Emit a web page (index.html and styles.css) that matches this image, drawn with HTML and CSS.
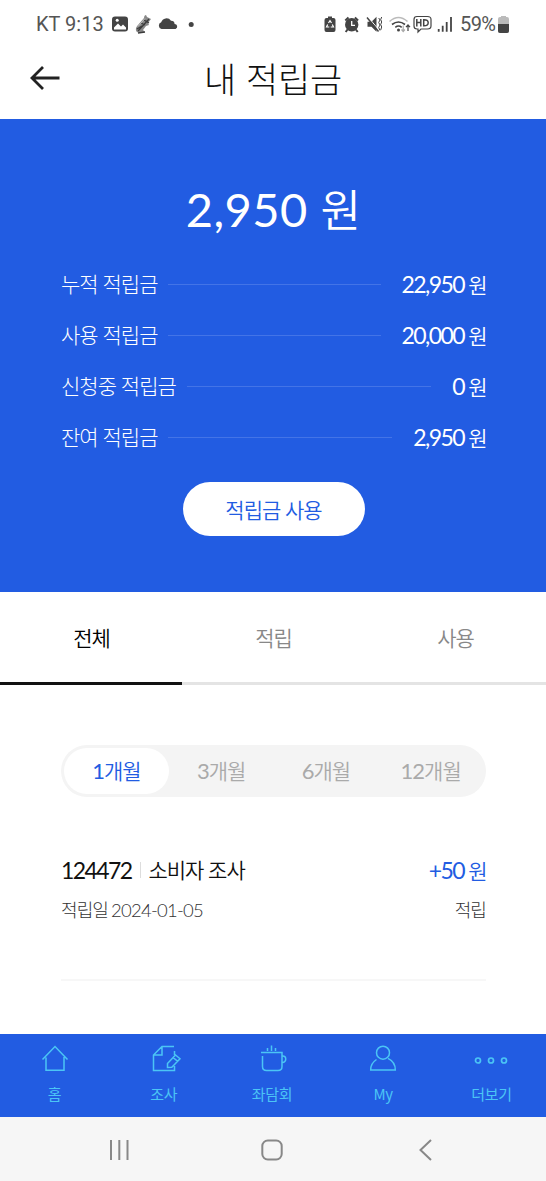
FILE: index.html
```html
<!DOCTYPE html>
<html lang="ko">
<head>
<meta charset="utf-8">
<title>내 적립금</title>
<link rel="stylesheet" href="styles.css">
</head>
<body>
<div class="screen">
  <div class="status">
    <span class="carrier">KT 9:13</span>
    <svg class="status-left" width="84" height="22" viewBox="0 0 84 22">
      <rect x="0" y="3.500" width="16" height="15" rx="3" fill="#444"/>
      <path d="M2 14.500l4-4 3 3 2-2 3 3v2H2z" fill="#fff"/><circle cx="5.200" cy="7.300" r="1.500" fill="#fff"/>
      <path d="M25 19c-2-2-1-5 1-7l6-7c0-2 1-3 2-3l1 2 4 2-3 4 1 2-3 1-3 4 2 2-5 1z" fill="#888"/>
      <path d="M26 18L37 6M25 16l5-3m-1-3 4 2m-1-5 5 3m-11 10 7-1" stroke="#3c3c3c" stroke-width="1.300" fill="none"/>
      <path d="M26 13.500l7-8" stroke="#ccc" stroke-width=".8"/>
      <path d="M49.500 16a3.500 3.500 0 0 1-.3-6.700A5.500 5.500 0 0 1 59 7.700a3.500 3.500 0 0 1 3.600 3.300 2.600 2.600 0 0 1 1 5z" fill="#444"/>
      <circle cx="79.200" cy="11.500" r="2.500" fill="#444"/>
    </svg>
    <svg class="status-right" width="132" height="22" viewBox="0 0 132 22" fill="none" stroke="#444" stroke-width="1.600">
      <path d="M4 5V3.500h4V5h1.500q2 0 2 2v10q0 2-2 2h-7q-2 0-2-2V7q0-2 2-2z" fill="#444" stroke="none"/>
      <path d="M4.500 10L6 7.600 7.500 10M3.700 11.500L2.500 14h2.800M8.300 11.500L9.500 14H6.700" stroke="#fff" stroke-width="1.200"/>
      <circle cx="27.700" cy="11.800" r="6.700" fill="#444" stroke="none"/>
      <path d="M21.300 7.500l3.200-3M34.100 7.500l-3.200-3M23.500 16.500L21.700 19M31.900 16.500l1.800 2.500" stroke-width="2"/>
      <path d="M27.700 8v4.300h3.300" stroke="#fff" stroke-width="1.300"/>
      <path d="M43.500 8.700h4l5-5v15l-5-5h-4z" fill="#444" stroke="none"/>
      <path d="M44.500 4.500l10 12" stroke="#fff" stroke-width="1"/><path d="M43 4.500l11.500 14" stroke-width="1.500"/>
      <path d="M54.700 5l1.300 2-1.300 2.500 1.300 2.500-1.300 2.500 1.300 3M57.700 4l-1 2.500 1 2.500-1 2.500 1 2.500-1 3" stroke-width="1"/>
      <path d="M65.500 8.500q9-8 18 0" stroke="#bbb"/><path d="M68 11.500q6.500-5 13 0M71.300 14.300q3.200-2.500 6.400 0"/><circle cx="74.500" cy="17" r="1.500" fill="#444" stroke="none"/>
      <path d="M79.200 12.500v6m-1.700-2l1.700 2 1.700-2" stroke="#aaa" stroke-width="1.200"/><path d="M84 18v-6m-2 2.200l2-2.200 2 2.200" stroke-width="1.200"/>
      <path d="M93 3.500h10.500q3.500 0 3.500 3v6.500q0 3-3.500 3H97l-3 3v-3h-1q-3 0-3-3V6.500q0-3 3-3z" stroke-width="1.200"/>
      <path d="M92.800 6v7.500m4-7.500v7.500m-4-4h4M99.700 6.700v6.100q4.500.2 4.500-3t-4.500-3.100z" stroke-width="1.500"/>
      <path d="M114.700 16v2.700M118.700 12.700v6M122.700 9v9.700M127 4v14.700" stroke-width="1.800"/>
    </svg>
    <span class="battery-text">59%</span>
    <svg class="battery" width="11" height="17" viewBox="0 0 11 17"><path d="M3 1V0h5v1h1q2 0 2 2v12q0 2-2 2H2q-2 0-2-2V3q0-2 2-2z" fill="#bbb"/><path d="M0 8h11v7q0 2-2 2H2q-2 0-2-2z" fill="#444"/></svg>
  </div>

  <header class="header">
    <svg class="back" width="32" height="26" viewBox="0 0 32 26" fill="none" stroke="#222" stroke-width="2.800"><path d="M30.500 13H3M14 2L3 13l11 11"/></svg>
    <h1 class="title">내 적립금</h1>
  </header>

  <section class="hero">
    <div class="total">2,950 <span class="won">원</span></div>
    <dl class="summary">
      <div class="line"><dt>누적 적립금</dt><i></i><dd>22,950 <span class="won">원</span></dd></div>
      <div class="line"><dt>사용 적립금</dt><i></i><dd>20,000 <span class="won">원</span></dd></div>
      <div class="line"><dt>신청중 적립금</dt><i></i><dd>0 <span class="won">원</span></dd></div>
      <div class="line"><dt>잔여 적립금</dt><i></i><dd>2,950 <span class="won">원</span></dd></div>
    </dl>
    <button class="use">적립금 사용</button>
  </section>

  <nav class="tabs"><span class="tab active">전체</span><span class="tab">적립</span><span class="tab">사용</span></nav>

  <main class="history">
    <div class="periods"><span class="period on">1<span class="ko">개월</span></span><span class="period">3<span class="ko">개월</span></span><span class="period">6<span class="ko">개월</span></span><span class="period">12<span class="ko">개월</span></span></div>
    <article class="entry">
      <div class="row main-row"><span class="name"><span>124472</span><i class="bar"></i><span class="kind">소비자 조사</span></span><span class="amount">+50 <span class="won">원</span></span></div>
      <div class="row sub-row"><span>적립일 <span class="date">2024-01-05</span></span><span>적립</span></div>
    </article>
  </main>

  <nav class="bottom">
    <div class="item"><svg width="30" height="30" viewBox="0 0 30 30"><path d="M2.500 15.500L15 2.500l12.500 13M6 13.500v12.800h18V13"/></svg><span>홈</span></div>
    <div class="item"><svg width="30" height="30" viewBox="0 0 30 30"><path d="M25 2.500H13L4.500 11v15.500h21V22M25.500 7V11M4.500 11H13V2.500M18.500 19.500l8-8.500 4.500 3.700-8.200 8.500-4.300.2zM24 13.500l4.500 3.700"/></svg><span>조사</span></div>
    <div class="item cup"><svg width="30" height="30" viewBox="0 0 30 30"><path d="M4 8.500h21v14q0 4-4 4H9.500q-4 0-4-4V12M25 12c5-1 5 7 0 6.500M10.500 4v3M14.500 1.500V7M18.500 4v3"/></svg><span>좌담회</span></div>
    <div class="item my"><svg width="30" height="30" viewBox="0 0 30 30"><circle cx="15" cy="8.700" r="6.500"/><path d="M8.500 15.500Q2.500 19.500 2.700 26h24.600Q27.500 18 20 14.300"/></svg><span>My</span></div>
    <div class="item"><svg width="36" height="30" viewBox="0 0 36 30"><g stroke-width="1.700"><circle cx="5" cy="16.500" r="2.500"/><circle cx="18" cy="16.500" r="2.500"/><circle cx="31" cy="16.500" r="2.500"/></g></svg><span>더보기</span></div>
  </nav>

  <div class="system">
    <svg width="22" height="22" viewBox="0 0 22 22"><path d="M3 1v20M11.300 1v20M19.500 1v20"/></svg>
    <svg width="22" height="22" viewBox="0 0 22 22"><rect x="1.300" y="1.500" width="19.400" height="19" rx="5.500"/></svg>
    <svg width="22" height="22" viewBox="0 0 22 22"><path d="M16 1L5.500 11 16 21"/></svg>
  </div>
</div>
</body>
</html>
```
FILE: styles.css
```css
* { box-sizing: border-box; }
body { margin: 0; background: #fff; font-family: Lato, "Noto Sans CJK KR", sans-serif; }
.screen { width: 546px; height: 1181px; display: flex; flex-direction: column; overflow: hidden; }
svg { display: block; flex: none; overflow: visible; }
.won, .ko { font-weight: 350; }

.status { height: 48px; display: flex; align-items: center; padding: 0 36px; font: 400 20px Roboto, sans-serif; color: #555; flex: none; }
.carrier { width: 76px; white-space: nowrap; }
.status-left { margin-right: 126px; }
.status-right { margin-left: 2px; }
.battery-text { width: 38px; margin-left: 4px; letter-spacing: -.6px; white-space: nowrap; }

.header { height: 71px; display: grid; grid-template-columns: 60px 1fr 60px; align-items: center; flex: none; }
.back { margin: 0 0 11px 29px; }
.title { margin: 0 0 9px; text-align: center; font-size: 35px; font-weight: 200; line-height: 50px; letter-spacing: -.2px; color: #111; }

.hero { height: 473px; background: #225ce2; color: #fff; padding: 56px 60px 0 61px; display: flex; flex-direction: column; align-items: center; flex: none; }
.total { font-size: 47px; line-height: 68px; letter-spacing: .5px; white-space: nowrap; }
.total .won { font-size: 44px; }
.summary { width: 100%; margin: 14px 0 0; }
.line { height: 51px; display: flex; align-items: center; white-space: nowrap; }
.line dt { padding-bottom: 2px; font-size: 21px; font-weight: 300; letter-spacing: -.97px; }
.line i { flex: 1; height: 1px; background: #4374e7; margin: 1px 21px 0 11px; }
.line dd { margin: 0 -1px 0 0; font-size: 23px; letter-spacing: -1.6px; }
.line .won, .amount .won { font-size: 21px; letter-spacing: -.5px; }
.use { width: 182px; height: 54px; margin-top: 20px; padding: 0 0 1px; border: 0; border-radius: 27px; background: #fff; color: #225ce2; font: 350 21px Lato, "Noto Sans CJK KR", sans-serif; letter-spacing: -1px; }

.tabs { height: 93px; display: grid; grid-template-columns: repeat(3, 1fr); flex: none; }
.tab { display: flex; align-items: center; justify-content: center; padding: 0 0 1px 1px; border-bottom: 3px solid #e4e4e4; font-size: 21px; font-weight: 350; letter-spacing: -1px; color: #888; }
.tab.active { color: #000; border-color: #111; }

.history { flex: 1; padding: 60px 60px 0 61px; }
.periods { height: 52px; border-radius: 26px; background: #f4f4f4; padding: 3px; display: grid; grid-template-columns: repeat(4, 1fr); }
.period { display: flex; align-items: center; justify-content: center; padding-bottom: 2px; border-radius: 23px; font-size: 22px; letter-spacing: -1px; color: #aaa; }
.period .ko { font-size: 21px; }
.period.on { background: #fff; color: #225ce2; }
.entry { margin-top: 55px; height: 129px; border-bottom: 2px solid #f7f7f7; }
.row { display: flex; justify-content: space-between; align-items: center; white-space: nowrap; }
.main-row { height: 36px; font-size: 23px; letter-spacing: -1.6px; color: #111; }
.name { display: flex; align-items: center; }
.kind { padding-bottom: 2px; font-size: 21px; font-weight: 350; letter-spacing: -1px; }
.bar { width: 1px; height: 16px; background: #ddd; margin: 0 7px 0 9px; }
.amount { margin-right: -1px; color: #225ce2; }
.sub-row { height: 41px; font-size: 18px; font-weight: 300; letter-spacing: -.9px; color: #333; }
.date { font-size: 18.5px; letter-spacing: -.75px; margin-left: -1px; }

.bottom { height: 83px; background: #225ce2; color: #4bc5f5; display: grid; grid-template-columns: repeat(5, 1fr); flex: none; }
.item { display: flex; flex-direction: column; align-items: center; padding-top: 10px; font: 400 15px "Noto Sans CJK KR", sans-serif; }
.item svg { fill: none; stroke: currentColor; stroke-width: 1.5; }
.item span { margin-top: 8px; line-height: 24px; letter-spacing: -.3px; }
.cup { padding-right: 2px; }
.my { padding-left: 2px; }

.system { height: 64px; padding-top: 1px; background: #f6f6f6; display: grid; grid-template-columns: 238px 68px 240px; align-items: center; justify-items: center; flex: none; }
.system svg { fill: none; stroke: #888; stroke-width: 2; }
```
